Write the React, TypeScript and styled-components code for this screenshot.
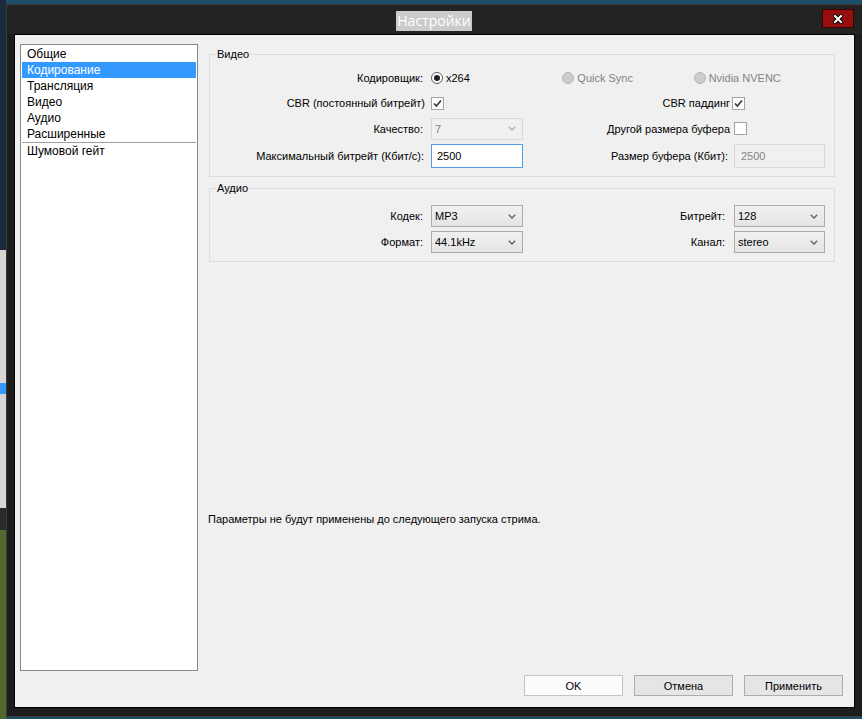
import styled, { createGlobalStyle } from 'styled-components';

const GlobalStyle = createGlobalStyle`
  html, body {
    margin: 0;
    padding: 0;
  }
  body {
    font-family: "Liberation Sans", Arial, sans-serif;
    background: #1c4e68;
    overflow: hidden;
  }
`

const Desktop = styled.div`
  height: 719px;
  box-sizing: border-box;
  padding: 4px 0 0 6px;
  overflow: hidden;
  background:
    linear-gradient(to bottom, #1b2b3b 0 250px, #d6d6d6 250px 383px, #3399ff 383px 394px, #d6d6d6 394px 508px, #2a2a2a 508px 530px, #50692c 530px) left top / 6px 100% no-repeat,
    #1c4e68;
`
const Window = styled.div`
  width: 857px;
  height: 713px;
  box-sizing: border-box;
  border: 1px solid #3a3a3a;
  background: #1d1d1d;
  display: flex;
  flex-direction: column;
  padding: 0 7px 8px;
`
const TitleBar = styled.div`
  height: 29px;
  margin: 0 -7px;
  padding: 0 8px 0 7px;
  background: #232323;
  display: grid;
  grid-template-columns: 1fr auto 1fr;
`
const Title = styled.div`
  grid-column: 2;
  align-self: start;
  margin-top: 6px;
  height: 20px;
  line-height: 20px;
  padding: 0 1px;
  background: #cbcbcb;
  color: #ffffff;
  font-family: "Open Sans", "Liberation Sans", sans-serif;
  font-size: 14px;
`
const CloseButton = styled.div`
  grid-column: 3;
  justify-self: end;
  align-self: start;
  margin-top: 4px;
  width: 32px;
  height: 19px;
  box-sizing: border-box;
  border: 1px solid #3c0000;
  background: #950f0f;
  display: flex;
  align-items: center;
  justify-content: center;
`
const Client = styled.div`
  height: 674px;
  box-sizing: border-box;
  border: 1px solid #000;
  background: #f0f0f0;
  display: grid;
  grid-template-rows: 627px 21px;
  row-gap: 4px;
  padding: 9px 11px 11px 5px;
`
const Main = styled.div`
  display: grid;
  grid-template-columns: 178px 626px;
  column-gap: 11px;
`
const List = styled.div`
  border: 1px solid #828790;
  background: #fff;
  padding-top: 1px;
`
const ListItem = styled.div<{ $selected?: boolean }>`
  height: 16px;
  line-height: 16px;
  margin: 0 1px;
  padding-left: 5px;
  font-size: 12px;
  color: ${p => (p.$selected ? '#fff' : '#000')};
  background: ${p => (p.$selected ? '#3399ff' : 'transparent')};
`
const ListSeparator = styled.div`
  height: 1px;
  margin: 0 1px;
  background: #a0a0a0;
`
const RightPanel = styled.div`
  display: flex;
  flex-direction: column;
  padding-top: 10px;
`
const GroupBox = styled.div<{ $top: number; $bottom: number }>`
  position: relative;
  border: 1px solid #dcdcdc;
  padding: ${p => p.$top}px 9px ${p => p.$bottom}px 0;
  & + & {
    margin-top: 11px;
  }
`
const GroupTitle = styled.span`
  position: absolute;
  top: -7px;
  left: 6px;
  padding: 0 1px;
  background: #f0f0f0;
  font-size: 11px;
  line-height: 13px;
  color: #000;
`
const FormGrid = styled.div<{ $rows: string }>`
  display: grid;
  grid-template-columns: 215px 92px 1fr 91px;
  grid-template-rows: ${p => p.$rows};
  column-gap: 6px;
  align-items: center;
`
const Label = styled.div<{ $col?: number; $pull?: number }>`
  grid-column: ${p => p.$col || 1};
  margin-right: ${p => p.$pull || 0}px;
  text-align: right;
  font-size: 11px;
  color: #000;
  white-space: nowrap;
`
const RadioRow = styled.div`
  grid-column: 2 / 5;
  display: flex;
`
const RadioItem = styled.div<{ $disabled?: boolean }>`
  width: 132px;
  display: flex;
  align-items: center;
  gap: 3px;
  font-size: 11px;
  color: ${p => (p.$disabled ? '#838383' : '#000')};
`
const RadioCircle = styled.span<{ $checked?: boolean; $disabled?: boolean }>`
  width: 12px;
  height: 12px;
  box-sizing: border-box;
  border-radius: 50%;
  border: 1px solid ${p => (p.$disabled ? '#b5b5b5' : '#5a5a5a')};
  background: ${p => (p.$disabled ? '#cccccc' : '#fff')};
  display: flex;
  align-items: center;
  justify-content: center;
  &::after {
    content: '';
    display: ${p => (p.$checked ? 'block' : 'none')};
    width: 6px;
    height: 6px;
    border-radius: 50%;
    background: #1f1f1f;
  }
`
const CheckBox = styled.span<{ $col: number; $shift?: number }>`
  grid-column: ${p => p.$col};
  margin-left: ${p => p.$shift || 0}px;
  width: 13px;
  height: 13px;
  box-sizing: border-box;
  border: 1px solid #a3a3a3;
  background: #fff;
  display: flex;
  align-items: center;
  justify-content: center;
`
const Combo = styled.div<{ $col: number; $disabled?: boolean }>`
  grid-column: ${p => p.$col};
  height: 22px;
  box-sizing: border-box;
  border: 1px solid ${p => (p.$disabled ? '#d9d9d9' : '#acacac')};
  background: ${p => (p.$disabled ? '#f0f0f0' : 'linear-gradient(#f0f0f0, #e5e5e5)')};
  color: ${p => (p.$disabled ? '#838383' : '#000')};
  font-size: 11px;
  display: flex;
  align-items: center;
  justify-content: space-between;
  padding: 0 6px 0 3px;
`
const TextInput = styled.div<{ $col: number; $disabled?: boolean }>`
  grid-column: ${p => p.$col};
  height: 24px;
  box-sizing: border-box;
  border: 1px solid ${p => (p.$disabled ? '#d9d9d9' : '#569de5')};
  background: ${p => (p.$disabled ? '#f0f0f0' : '#fff')};
  color: ${p => (p.$disabled ? '#838383' : '#000')};
  font-size: 11px;
  display: flex;
  align-items: center;
  padding-left: ${p => (p.$disabled ? 6 : 5)}px;
`
const Notice = styled.div`
  margin: 251px 0 0 -1px;
  font-size: 11px;
  line-height: 13px;
  color: #000;
`
const Footer = styled.div`
  display: flex;
  justify-content: flex-end;
  gap: 11px;
`
const Button = styled.div<{ $default?: boolean }>`
  width: 99px;
  height: 21px;
  box-sizing: border-box;
  border: 1px solid ${p => (p.$default ? '#c4c4c4' : '#adadad')};
  background: ${p => (p.$default ? '#fcfcfc' : '#e5e5e5')};
  font-size: 11px;
  color: #000;
  display: flex;
  align-items: center;
  justify-content: center;
`

function Check() {
  return (
    <svg width="9" height="9" viewBox="0 0 9 9">
      <path d="M1 4.5 L3.4 7 L8 1.5" fill="none" stroke="#3a3a3a" strokeWidth="1.7" />
    </svg>
  )
}

function Chevron({ color }: { color: string }) {
  return (
    <svg width="8" height="5" viewBox="0 0 8 5">
      <path d="M0.8 0.8 L4 4 L7.2 0.8" fill="none" stroke={color} strokeWidth="1.5" />
    </svg>
  )
}

const sections = ['Общие', 'Кодирование', 'Трансляция', 'Видео', 'Аудио', 'Расширенные'];

export default function App() {
  return (
    <>
      <GlobalStyle />
      <Desktop>
        <Window>
          <TitleBar>
            <Title>Настройки</Title>
            <CloseButton>
              <svg width="10" height="10" viewBox="0 0 10 10">
                <path d="M2 2 L8 8 M8 2 L2 8" stroke="#000" strokeWidth="4" strokeLinecap="square" />
                <path d="M2 2 L8 8 M8 2 L2 8" stroke="#fff" strokeWidth="2" strokeLinecap="square" />
              </svg>
            </CloseButton>
          </TitleBar>

          <Client>
            <Main>
              <List>
                {sections.map((name) => (
                  <ListItem key={name} $selected={name === 'Кодирование'}>{name}</ListItem>
                ))}
                <ListSeparator />
                <ListItem>Шумовой гейт</ListItem>
              </List>

              <RightPanel>
                <GroupBox $top={10} $bottom={6}>
                  <GroupTitle>Видео</GroupTitle>
                  <FormGrid $rows="25px 26px 25px 29px">
                    <Label $pull={2}>Кодировщик:</Label>
                    <RadioRow>
                      <RadioItem><RadioCircle $checked />x264</RadioItem>
                      <RadioItem $disabled><RadioCircle $disabled />Quick Sync</RadioItem>
                      <RadioItem $disabled><RadioCircle $disabled />Nvidia NVENC</RadioItem>
                    </RadioRow>

                    <Label>CBR (постоянный битрейт)</Label>
                    <CheckBox $col={2}><Check /></CheckBox>
                    <Label $col={3} $pull={-2}>CBR паддинг</Label>
                    <CheckBox $col={4} $shift={-2}><Check /></CheckBox>

                    <Label $pull={2}>Качество:</Label>
                    <Combo $col={2} $disabled>7<Chevron color="#b4b4b4" /></Combo>
                    <Label $col={3} $pull={-2}>Другой размера буфера</Label>
                    <CheckBox $col={4}></CheckBox>

                    <Label $pull={1}>Максимальный битрейт (Кбит/с):</Label>
                    <TextInput $col={2}>2500</TextInput>
                    <Label $col={3}>Размер буфера (Кбит):</Label>
                    <TextInput $col={4} $disabled>2500</TextInput>
                  </FormGrid>
                </GroupBox>

                <GroupBox $top={14} $bottom={6}>
                  <GroupTitle>Аудио</GroupTitle>
                  <FormGrid $rows="26px 26px">
                    <Label $pull={2}>Кодек:</Label>
                    <Combo $col={2}>MP3<Chevron color="#6a6a6a" /></Combo>
                    <Label $col={3} $pull={3}>Битрейт:</Label>
                    <Combo $col={4}>128<Chevron color="#6a6a6a" /></Combo>

                    <Label $pull={2}>Формат:</Label>
                    <Combo $col={2}>44.1kHz<Chevron color="#6a6a6a" /></Combo>
                    <Label $col={3} $pull={3}>Канал:</Label>
                    <Combo $col={4}>stereo<Chevron color="#6a6a6a" /></Combo>
                  </FormGrid>
                </GroupBox>

                <Notice>Параметры не будут применены до следующего запуска стрима.</Notice>
              </RightPanel>
            </Main>

            <Footer>
              <Button $default>OK</Button>
              <Button>Отмена</Button>
              <Button>Применить</Button>
            </Footer>
          </Client>
        </Window>
      </Desktop>
    </>
  );
}
